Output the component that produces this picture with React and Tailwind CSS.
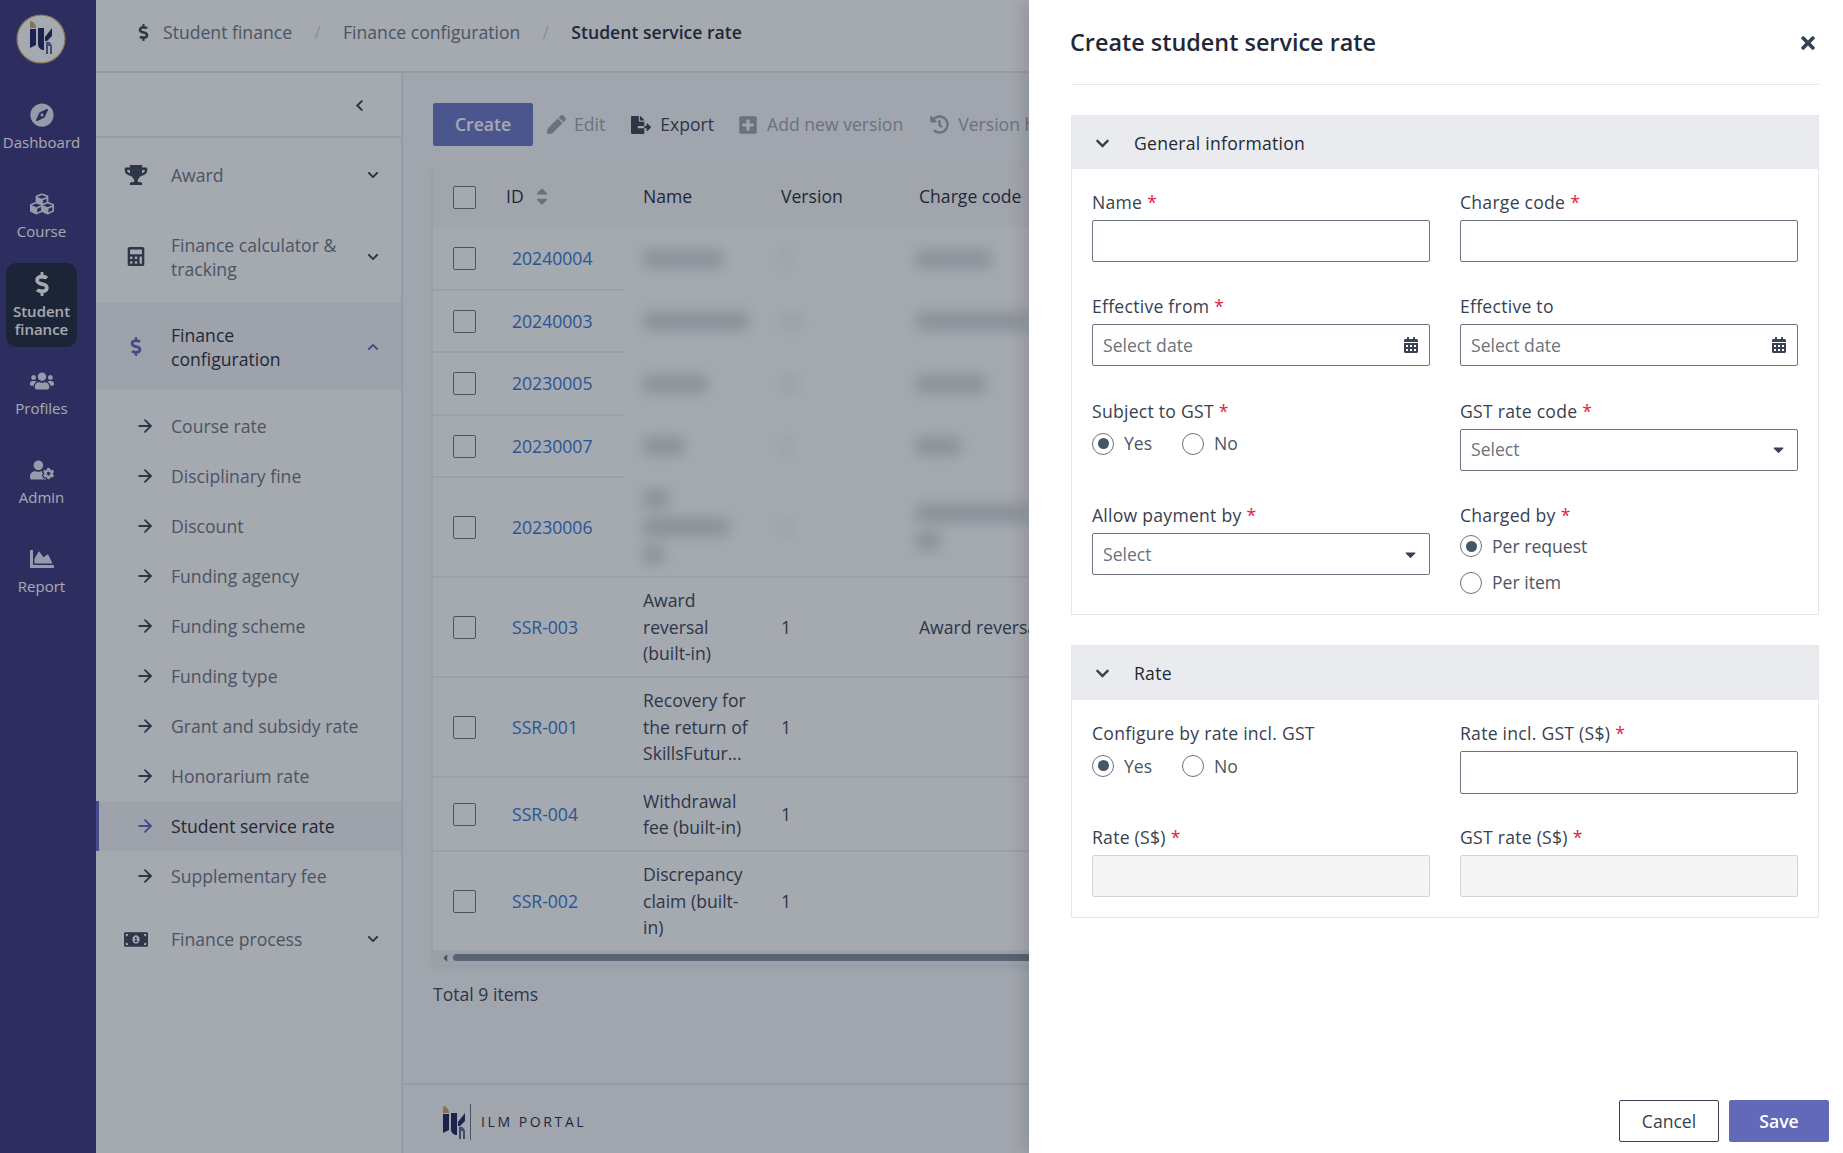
import React from 'react';
import {
    FaDollarSign, FaTrophy, FaCalculator, FaMoneyBillAlt, FaCompass, FaCubes, FaUsers, FaUserCog, FaChartArea,
    FaChevronLeft, FaChevronDown, FaChevronUp, FaPen, FaFileExport, FaPlusSquare, FaHistory,
    FaCalendarAlt, FaTimes, FaCaretDown, FaCaretUp, FaCaretLeft,
} from 'react-icons/fa';
import { ArrowRight } from 'lucide-react';

const NAV = [
    { label: 'Dashboard', icon: FaCompass },
    { label: 'Course', icon: FaCubes },
    { label: 'Student finance', icon: FaDollarSign, active: true },
    { label: 'Profiles', icon: FaUsers },
    { label: 'Admin', icon: FaUserCog },
    { label: 'Report', icon: FaChartArea },
];

const SUB_ITEMS = [
    'Course rate', 'Disciplinary fine', 'Discount', 'Funding agency', 'Funding scheme',
    'Funding type', 'Grant and subsidy rate', 'Honorarium rate', 'Student service rate', 'Supplementary fee',
];

const BLUR_ROWS = [
    { id: '20240004', h: 'h-[62px]', name: [80], ver: 12, code: [75] },
    { id: '20240003', h: 'h-[62px]', name: [106], ver: 22, code: [113] },
    { id: '20230005', h: 'h-[63px]', name: [64], ver: 18, code: [69] },
    { id: '20230007', h: 'h-[62px]', name: [41], ver: 12, code: [44] },
    { id: '20230006', h: 'h-[100px]', name: [26, 86, 21], ver: 12, code: [113, 24] },
];

const TEXT_ROWS = [
    { id: 'SSR-003', h: 'h-[100px]', name: ['Award', 'reversal', '(built-in)'], code: 'Award reversal (built-in)' },
    { id: 'SSR-001', h: 'h-[100px]', name: ['Recovery for', 'the return of', 'SkillsFutur...'], code: '' },
    { id: 'SSR-004', h: 'h-[74px]', name: ['Withdrawal', 'fee (built-in)'], code: '' },
    { id: 'SSR-002', h: 'h-[99px]', name: ['Discrepancy', 'claim (built-', 'in)'], code: '' },
];

const LogoBars = () => (
    <>
        <path d="M14 7 C17 7 20 10 20 14 L14 14 Z" fill="#c9a860" />
        <path d="M14 15 L20 15 L20 31 L14 34 Z" fill="#1a1f5e" />
        <path d="M22 14 L28 14 L28 36 C25 36 22 34 22 30 Z" fill="#1a1f5e" />
        <path d="M29 23 L36 14 L36 22 L31 27 L29 27 Z" fill="#1a1f5e" />
        <path d="M30 28 C33 27 36 29 36 33 L36 40 L34 40 L34 32 L32 32 L32 40 L30 40 Z" fill="#5b6594" />
    </>
);

const Checkbox = () => <span className="block w-[23px] h-[23px] rounded-[2px] border border-[#6b7280] bg-white" />;

const Required = () => <span className="text-[#e11d48] ml-[5px]">*</span>;

const Label = ({ text, required }) => (
    <div className="h-6 leading-6 mb-[6px] text-[#374151] font-medium tracking-[0.25px]">
        {text}
        {required && <Required />}
    </div>
);

const Input = ({ disabled, tall }) => (
    <div className={`${tall ? 'h-[43px]' : 'h-[42px]'} rounded-[2px] border ${disabled ? 'border-[#d1d5db] bg-[#f5f5f5]' : 'border-[#6b7280] bg-white'}`} />
);

const Field = ({ label, required, tall, disabled }) => (
    <div>
        <Label text={label} required={required} />
        <Input tall={tall} disabled={disabled} />
    </div>
);

const DateField = ({ label, required }) => (
    <div>
        <Label text={label} required={required} />
        <div className="h-[42px] rounded-[2px] border border-[#6b7280] px-[10px] flex items-center justify-between">
            <span className="text-[#6b7280]">Select date</span>
            <FaCalendarAlt className="text-[#374151] text-[16px]" />
        </div>
    </div>
);

const SelectField = ({ label, required }) => (
    <div>
        <Label text={label} required={required} />
        <div className="h-[42px] rounded-[2px] border border-[#6b7280] px-[10px] flex items-center justify-between">
            <span className="text-[#6b7280]">Select</span>
            <FaCaretDown className="text-[#374151] text-[17px]" />
        </div>
    </div>
);

const Radio = ({ label, checked }) => (
    <div className="flex items-center gap-[10px] text-[#4b5563]">
        <span className="w-[22px] h-[22px] rounded-full border border-[#6b7280] flex items-center justify-center shrink-0">
            {checked && <span className="w-[11px] h-[11px] rounded-full bg-[#475569]" />}
        </span>
        <span>{label}</span>
    </div>
);

const YesNo = ({ label, required }) => (
    <div>
        <Label text={label} required={required} />
        <div className="flex gap-[30px] h-[30px] items-center">
            <Radio label="Yes" checked />
            <Radio label="No" />
        </div>
    </div>
);

const Section = ({ title, headH, children, body }) => (
    <div className="border border-[#e5e7eb]">
        <div className={`${headH} bg-[#e9ebee] flex items-center pl-[23px] gap-[24px] pt-[1px] text-[#1f2937] font-medium tracking-[0.25px]`}>
            <FaChevronDown className="text-[#374151] text-[15px]" />
            <span>{title}</span>
        </div>
        <div className={`grid grid-cols-2 gap-x-[30px] px-5 ${body}`}>{children}</div>
    </div>
);

const App = () => {
    return (
        <div className="relative w-[1843px] h-[1153px] overflow-hidden flex bg-white text-[17.6px] leading-[26.4px] text-[#374151] font-['Open_Sans','Noto_Sans',sans-serif]">
            {/* Main nav */}
            <div className="w-[96px] shrink-0 bg-[#383378] flex flex-col">
                <div className="h-[85px] pl-[16px] pt-[14px]">
                    <svg width="50" height="50" viewBox="0 0 50 50">
                        <circle cx="25" cy="25" r="24" fill="#fff" stroke="#c9a860" strokeWidth="1.2" />
                        <LogoBars />
                    </svg>
                </div>
                <div className="flex flex-col gap-[4.8px]">
                    {NAV.map(n => {
                        const Icon = n.icon;
                        return (
                            <div
                                key={n.label}
                                className={`h-[84px] w-[71px] ml-[6px] rounded-[10px] flex flex-col items-center justify-center text-center text-[15px] leading-[18px] ${n.active ? 'bg-[#1b2336] text-white font-semibold' : 'text-white'}`}
                            >
                                <Icon className={`text-[24px] mb-[6px] shrink-0 ${n.active ? 'text-white' : 'text-[#e6e6f5]'}`} />
                                <span className="block w-[84px]">{n.label}</span>
                            </div>
                        );
                    })}
                </div>
            </div>

            <div className="flex-1 flex flex-col min-w-0">
                {/* Breadcrumb */}
                <div className="h-[73px] shrink-0 border-b-2 border-[#e5e7eb] flex items-center pl-[39px] pb-[7px] text-[#6b7280]">
                    <FaDollarSign className="text-[#374151] text-[17px] mr-[11px]" />
                    <span>Student finance</span>
                    <span className="w-[51px] text-center text-[#d1d5db]">/</span>
                    <span>Finance configuration</span>
                    <span className="w-[51px] text-center text-[#d1d5db]">/</span>
                    <span className="text-[#1f2937] font-semibold">Student service rate</span>
                </div>

                <div className="flex-1 flex min-h-0">
                    {/* Sub nav */}
                    <div className="w-[307px] shrink-0 border-r-2 border-[#e5e7eb] flex flex-col text-[#6b7280] leading-6">
                        <div className="h-[65px] border-b-2 border-[#eceef0] pt-[2px] flex items-center justify-end pr-[35px]">
                            <FaChevronLeft className="text-[#374151] text-[13px]" />
                        </div>
                        <div className="h-[78px] pb-[4px] flex items-center pl-[28px] pr-[22px]">
                            <FaTrophy className="text-[#374151] text-[20px] w-[24px] mr-[23px]" />
                            <span className="flex-1">Award</span>
                            <FaChevronDown className="text-[#374151] text-[12px]" />
                        </div>
                        <div className="h-[87px] pb-[6px] flex items-center pl-[28px] pr-[22px]">
                            <FaCalculator className="text-[#374151] text-[19px] w-[24px] mr-[23px]" />
                            <span className="flex-1">Finance calculator &amp;<br />tracking</span>
                            <FaChevronDown className="text-[#374151] text-[12px]" />
                        </div>
                        <div className="h-[87px] bg-[#f3f4f5] flex items-center pl-[28px] pr-[22px] text-[#1f2937]">
                            <FaDollarSign className="text-[#5f63c0] text-[19px] w-[24px] mr-[23px]" />
                            <span className="flex-1">Finance<br />configuration</span>
                            <FaChevronUp className="text-[#5f63c0] text-[12px]" />
                        </div>
                        <div className="pt-[11px]">
                            {SUB_ITEMS.map(s => {
                                const active = s === 'Student service rate';
                                return (
                                    <div
                                        key={s}
                                        className={`h-[50px] flex items-center ${active ? 'bg-[#f3f4f5] border-l-[3px] border-[#5f63c0] pl-[39px] text-[#1f2937]' : 'pl-[42px]'}`}
                                    >
                                        <ArrowRight size={20} strokeWidth={2.2} className={`shrink-0 -ml-[3px] mr-[16px] ${active ? 'text-[#5f63c0]' : 'text-[#374151]'}`} />
                                        <span>{s}</span>
                                    </div>
                                );
                            })}
                        </div>
                        <div className="h-[76px] flex items-center pl-[28px] pr-[22px]">
                            <FaMoneyBillAlt className="text-[#374151] text-[21px] w-[24px] mr-[23px]" />
                            <span className="flex-1">Finance process</span>
                            <FaChevronDown className="text-[#374151] text-[12px]" />
                        </div>
                    </div>

                    {/* Main content */}
                    <div className="flex-1 min-w-0 bg-[#f9f9fa] flex flex-col overflow-hidden">
                        <div className="flex-1 pl-[30px] pt-[30px] w-[1420px]">
                            <div className="flex items-center h-[43px] text-[#9ca3af] font-medium">
                                <div className="w-[100px] h-[43px] rounded-[2px] bg-[#6b76c6] text-white font-semibold flex items-center justify-center">Create</div>
                                <FaPen className="ml-[14px] text-[19px]" />
                                <span className="ml-[8px]">Edit</span>
                                <FaFileExport className="ml-[26px] text-[#374151] text-[20px]" />
                                <span className="ml-[9px] text-[#374151]">Export</span>
                                <FaPlusSquare className="ml-[24px] text-[20px]" />
                                <span className="ml-[9px]">Add new version</span>
                                <FaHistory className="ml-[27px] text-[19px]" />
                                <span className="ml-[9px]">Version history</span>
                            </div>

                            <div className="mt-[20px] bg-white shadow-[0_3px_8px_rgba(0,0,0,0.08)]">
                                <table className="table-fixed w-full border-collapse">
                                    <colgroup>
                                        <col className="w-[60px]" />
                                        <col className="w-[132px]" />
                                        <col className="w-[137px]" />
                                        <col className="w-[138px]" />
                                        <col />
                                    </colgroup>
                                    <thead>
                                        <tr className="h-[62px] bg-[#f8f8f9] text-left text-[#1f2937]">
                                            <th className="pl-5 font-normal"><Checkbox /></th>
                                            <th className="pl-[13px] font-normal">
                                                <span className="inline-flex items-center gap-[9px] -translate-y-[1px]">
                                                    ID
                                                    <span className="flex flex-col text-[#9ca3af] text-[18px] leading-none">
                                                        <FaCaretUp className="-mb-[8px]" />
                                                        <FaCaretDown />
                                                    </span>
                                                </span>
                                            </th>
                                            <th className="pl-[18px] font-normal"><span className="block -translate-y-[1px]">Name</span></th>
                                            <th className="pl-[19px] font-normal"><span className="block -translate-y-[1px]">Version</span></th>
                                            <th className="pl-[19px] font-normal"><span className="block -translate-y-[1px]">Charge code</span></th>
                                        </tr>
                                    </thead>
                                    <tbody>
                                        {BLUR_ROWS.map(r => (
                                            <tr key={r.id} className={r.h}>
                                                <td className="pl-5 border-b-2 border-[#eff0f1]"><Checkbox /></td>
                                                <td className="pl-[19px] border-b-2 border-[#eff0f1] text-[#2f74d0] font-medium">{r.id}</td>
                                                <td className="pl-[18px]">
                                                    <div className="flex flex-col gap-[10px] blur-[7px]">
                                                        {r.name.map((w, i) => (
                                                            <div key={i} className="h-[18px] bg-[#d4d6d9]" style={{ width: w }} />
                                                        ))}
                                                    </div>
                                                </td>
                                                <td className="pl-[18px]">
                                                    <div className="h-[18px] bg-[#f0f1f2] blur-[7px]" style={{ width: r.ver }} />
                                                </td>
                                                <td className="pl-[16px]">
                                                    <div className="flex flex-col gap-[10px] blur-[7px]">
                                                        {r.code.map((w, i) => (
                                                            <div key={i} className="h-[18px] bg-[#d4d6d9]" style={{ width: w }} />
                                                        ))}
                                                    </div>
                                                </td>
                                            </tr>
                                        ))}
                                        {TEXT_ROWS.map((r, idx) => (
                                            <tr key={r.id} className={`${r.h} ${idx < TEXT_ROWS.length - 1 ? 'border-b-2 border-[#eff0f1]' : ''} ${idx === 0 ? 'border-t-2 border-[#eff0f1]' : ''}`}>
                                                <td className="pl-5"><Checkbox /></td>
                                                <td className="pl-[19px] text-[#2f74d0] font-medium">{r.id}</td>
                                                <td className="pl-[18px] whitespace-nowrap">
                                                    {r.name.map(l => <div key={l}>{l}</div>)}
                                                </td>
                                                <td className="pl-[19px]">1</td>
                                                <td className="pl-[19px] whitespace-nowrap">{r.code}</td>
                                            </tr>
                                        ))}
                                    </tbody>
                                </table>
                                <div className="h-[15px] bg-[#f1f2f3] flex items-center pl-[6px]">
                                    <FaCaretLeft className="text-[#6b7280] text-[12px] mr-[2px]" />
                                    <div className="flex-1 h-[7px] rounded-full bg-[#7f8d9a]" />
                                </div>
                            </div>

                            <div className="mt-[16px] text-[#374151]">Total 9 items</div>
                        </div>

                        <div className="h-[70px] shrink-0 border-t-2 border-[#e5e7eb] flex items-center pl-[36px] pt-[6px]">
                            <svg width="30" height="36" viewBox="10 5 30 36" className="mr-[1px]">
                                <LogoBars />
                            </svg>
                            <span className="w-px h-[36px] bg-[#6b7280] mr-[10px]" />
                            <span className="text-[14px] tracking-[2.6px] text-[#1f2937]">ILM PORTAL</span>
                        </div>
                    </div>
                </div>
            </div>

            {/* Mask */}
            <div className="absolute inset-0 bg-gray-800/40" />

            {/* Drawer */}
            <div className="absolute top-0 right-0 bottom-0 w-[814px] bg-white shadow-[-6px_0_16px_rgba(0,0,0,0.12)] flex flex-col pl-[42px] pr-[24px]">
                <div className="h-[85px] shrink-0 border-b border-[#e5e7eb] flex items-center justify-between">
                    <span className="text-[23.4px] font-semibold text-[#1f2937] -ml-[1px]">Create student service rate</span>
                    <FaTimes className="text-[#374151] text-[20px] mr-[1px] mt-[2px]" />
                </div>

                <div className="flex-1 pt-[30px] flex flex-col gap-[30px]">
                    <Section title="General information" headH="h-[53px]" body="pt-[20.5px] pb-[18px] gap-y-[32.5px]">
                        <Field label="Name" required />
                        <Field label="Charge code" required />
                        <DateField label="Effective from" required />
                        <DateField label="Effective to" />
                        <YesNo label="Subject to GST" required />
                        <SelectField label="GST rate code" required />
                        <SelectField label="Allow payment by" required />
                        <div>
                            <Label text="Charged by" required />
                            <div className="flex flex-col gap-[10px]">
                                <Radio label="Per request" checked />
                                <Radio label="Per item" />
                            </div>
                        </div>
                    </Section>

                    <Section title="Rate" headH="h-[54px]" body="pt-[21px] pb-[20px] gap-y-[31px]">
                        <YesNo label="Configure by rate incl. GST" />
                        <Field label="Rate incl. GST (S$)" required tall />
                        <Field label="Rate (S$)" required disabled />
                        <Field label="GST rate (S$)" required disabled />
                    </Section>
                </div>

                <div className="shrink-0 flex justify-end gap-[10px] -mr-[10px] pb-[11px]">
                    <div className="w-[100px] h-[42px] rounded-[2px] border border-[#374151] text-[#374151] flex items-center justify-center">Cancel</div>
                    <div className="w-[100px] h-[42px] rounded-[2px] bg-[#6369b9] text-white font-semibold flex items-center justify-center">Save</div>
                </div>
            </div>
        </div>
    );
};

export default App;
